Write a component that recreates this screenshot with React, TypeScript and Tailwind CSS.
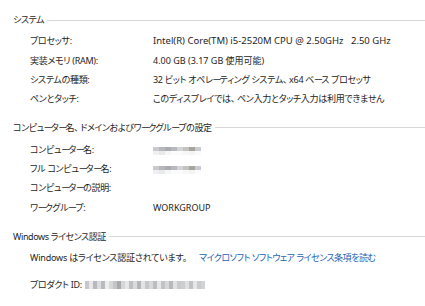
import React from "react";

const FONT = { fontFamily: '"Noto Sans", "Noto Sans CJK JP", sans-serif' };

// pixelated blur blocks (shades of gray), one per cell
const NAME_BLUR = [
  ["#c9cacd", "#b5b7bb", "#a9abb0", "#b7b9bd", "#d3d4d6", "#c4c2bf", "#a7a49c", "#c8cbcf"],
  ["#eef0f1", "#e7e9ea", "#f6f6f7", "#fbfbfb", "#fbfbfb", "#f7f7f7", "#f4f4f5", "#fbfbfb"],
];
const ID_BLUR = [
  "#c7c8cb", "#e8e8ea", "#b7b9bc", "#dcdde0", "#b9bbbe", "#eeeeef", "#d6d7da", "#c4c5c8", "#a9aaae",
  "#d6d6d8", "#e6e7e8", "#bfc0c3", "#dadbdd", "#b4b6b9", "#e3e4e5", "#c6c7ca", "#d8d9db", "#bcbec1",
  "#e7e7e9", "#c2c3c6", "#d7d8da", "#b8b9bd", "#e0e1e2", "#c9cacd", "#cdced1", "#dfe0e2", "#c0c1c4",
  "#e4e5e6", "#cacbcd", "#d2d3d5",
];

// the UI font has a narrower long-vowel mark; pull it in a little
function Jp({ text }: { text: string }) {
  return (
    <>
      {text.split(/(ー)/).map((p, i) =>
        p === "ー" ? (
          <span key={i} className="tracking-[-1.8px]">ー</span>
        ) : (
          <React.Fragment key={i}>{p}</React.Fragment>
        )
      )}
    </>
  );
}

function Blur({ rows }: { rows: string[][] }) {
  return (
    <div className="flex flex-col">
      {rows.map((r, i) => (
        <div key={i} className="flex">
          {r.map((c, j) => (
            <div key={j} className="w-[6px] h-[4px]" style={{ background: c }} />
          ))}
        </div>
      ))}
    </div>
  );
}

function Header({ title }: { title: string }) {
  return (
    <div className="h-[20px] flex items-center pl-[13px]">
      <span className="text-[9px] text-[#1e1e1e] whitespace-nowrap tracking-[-0.4px]">
        <Jp text={title} />
      </span>
      <div className="flex-1 ml-[3px] h-px bg-[#d7d7d7]" />
    </div>
  );
}

function Row({ label, children }: { label: string; children?: React.ReactNode }) {
  return (
    <div className="h-[19.33px] flex items-center pl-[30px] text-[9px] text-[#1e1e1e] whitespace-nowrap">
      <span className="w-[123px] shrink-0 tracking-[-0.3px]">
        <Jp text={label} />
      </span>
      {children}
    </div>
  );
}

export default function App() {
  return (
    <div
      className="w-[425px] h-[306px] bg-white overflow-hidden pt-[10px] [font-feature-settings:'palt']"
      style={FONT}
    >
      <section className="mb-[9px]">
        <Header title="システム" />
        <div className="pt-[1.3px]">
          <Row label="プロセッサ:">
            <span className="text-[9.5px]">Intel(R) Core(TM) i5-2520M CPU @ 2.50GHz&nbsp;&nbsp;&nbsp;2.50 GHz</span>
          </Row>
          <Row label="実装メモリ (RAM):">
            <span>4.00 GB (3.17 GB 使用可能)</span>
          </Row>
          <Row label="システムの種類:">
            <span className="tracking-[-0.3px]">
              <Jp text={"32 ビット オペレーティング システム、\u00a0x64 ベース プロセッサ"} />
            </span>
          </Row>
          <Row label="ペンとタッチ:">
            <span className="tracking-[-0.3px]">このディスプレイでは、&nbsp;ペン入力とタッチ入力は利用できません</span>
          </Row>
        </div>
      </section>

      <section className="mb-[9.4px]">
        <Header title={"コンピューター名、\u00a0ドメインおよびワークグループの設定"} />
        <div className="pt-[2.3px]">
          <Row label="コンピューター名:">
            <div className="mt-[3px]">
              <Blur rows={NAME_BLUR} />
            </div>
          </Row>
          <Row label="フル コンピューター名:">
            <div className="mt-[3px]">
              <Blur rows={NAME_BLUR} />
            </div>
          </Row>
          <Row label="コンピューターの説明:" />
          <Row label="ワークグループ:">
            <span>WORKGROUP</span>
          </Row>
        </div>
      </section>

      <section>
        <Header title="Windows ライセンス認証" />
        <div className="pt-[1px]">
          <div className="h-[20px] flex items-center pl-[30px] text-[9px] text-[#1e1e1e] whitespace-nowrap">
            <span className="tracking-[-0.2px]">Windows はライセンス認証されています。</span>
            <a className="ml-[12px] text-[#1a64b4] cursor-pointer tracking-[-0.5px]">
              マイクロソフト ソフトウェア ライセンス条項を読む
            </a>
          </div>
          <div className="h-[20px] mt-[7px] flex items-center pl-[30px] text-[9px] text-[#1e1e1e] whitespace-nowrap">
            <span className="tracking-[-0.3px]">プロダクト ID:</span>
            <div className="ml-[3px] flex">
              {ID_BLUR.map((c, i) => (
                <div key={i} className="w-[4px] h-[8px]" style={{ background: c }} />
              ))}
            </div>
          </div>
        </div>
      </section>
    </div>
  );
}
